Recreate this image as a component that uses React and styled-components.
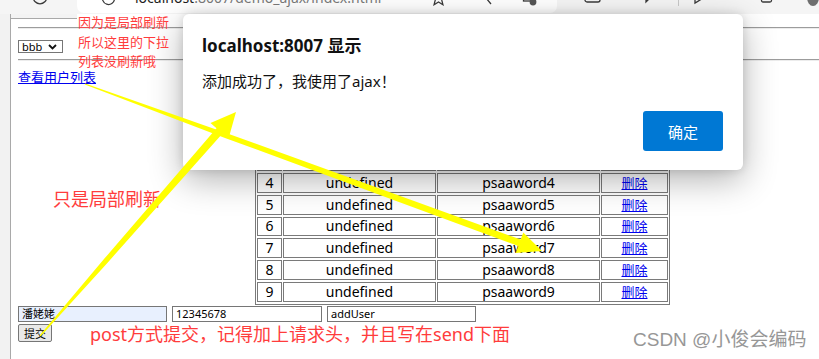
import React from 'react';
import styled, { createGlobalStyle } from 'styled-components';

const GlobalStyle = createGlobalStyle`
  html, body {
    margin: 0;
    padding: 0;
    background: #fff;
  }
  body {
    overflow: hidden;
    font-family: "Noto Sans", "Noto Sans CJK SC", sans-serif;
  }
  * {
    box-sizing: border-box;
  }
`;

const Screen = styled.div`
  position: relative;
  width: 819px;
  height: 359px;
  overflow: hidden;
  background: #f3f3f3;
  display: flex;
  flex-direction: column;
`;

/* browser chrome, only its lower edge is in the shot */
const TopBar = styled.div`
  flex: 0 0 14px;
  height: 14px;
  overflow: hidden;
  background: #f5f5f5;
`;

const TopBarInner = styled.div`
  display: flex;
  align-items: center;
  height: 28px;
  margin-top: -17px;
`;

const ToolSlot = styled.div`
  flex: 0 0 auto;
  display: flex;
  align-items: center;
  margin-left: ${p => p.$gap || 0}px;
  color: #3a3a3a;
`;

const AddressBar = styled.div`
  flex: 0 0 480px;
  height: 30px;
  margin-left: ${p => p.$gap}px;
  margin-top: 2px;
  padding-right: 20px;
  display: flex;
  align-items: center;
  background: #fff;
  border-radius: 7px;
`;

const UrlText = styled.div`
  flex: 1;
  margin-left: 18px;
  font-size: 14px;
  line-height: 28px;
  color: #7a7a7a;
  white-space: nowrap;
  overflow: hidden;
`;

const UrlHost = styled.span`
  color: #1e1e1e;
`;

const Divider = styled.div`
  width: 1px;
  height: 18px;
  margin-left: ${p => p.$gap}px;
  background: #c8c8c8;
`;

const Avatar = styled.div`
  width: 18px;
  height: 18px;
  margin-left: 34px;
  border-radius: 50%;
  background: #6e6e6e;
`;

const Body = styled.div`
  flex: 1;
  display: flex;
  min-height: 0;
`;

const SideStrip = styled.div`
  flex: 0 0 11px;
  background: #f2f2f2;
  border-right: 1px solid #a9a9a9;
`;

const Page = styled.div`
  flex: 1;
  min-width: 0;
  overflow: hidden;
  background: #fff;
`;

const FrameTop = styled.div`
  width: 66px;
  height: 5px;
  background: #f3f3f3;
  border-bottom: 1px solid #a9a9a9;
`;

const Content = styled.div`
  width: 896px;
  padding-left: 7px;
  font-family: "Noto Sans", "Noto Sans CJK SC", sans-serif;
  color: #000;
`;

const Rule = styled.hr`
  margin: ${p => p.$top}px 0 0;
  height: 0;
  border: 0;
  border-top: 1px solid #9c9c9c;
  border-bottom: 1px solid #ececec;
`;

const SelectBox = styled.div`
  width: 45px;
  height: 13px;
  margin-top: 11px;
  padding: 0 5px 0 3px;
  display: flex;
  align-items: center;
  justify-content: space-between;
  border: 1px solid #767676;
  font-size: 11px;
  line-height: 11px;
`;

const ListLink = styled.a`
  display: block;
  width: max-content;
  margin-top: 8px;
  font-size: 13px;
  line-height: 16px;
  color: #0000ee;
  text-decoration: underline;
`;

const UserTable = styled.table`
  margin: 19.6px auto 0;
  border: 1px solid #7a7a7a;
  border-spacing: 1px 2px;
  font-size: 14px;
  color: #000;
`;

const Cell = styled.td`
  width: ${p => p.$w}px;
  height: 19.8px;
  padding: 0;
  border: 1px solid #7a7a7a;
  text-align: center;
  line-height: 16px;
`;

const DeleteLink = styled.a`
  font-size: 13px;
  color: #0000ee;
  text-decoration: underline;
`;

const FormRow = styled.div`
  display: flex;
  gap: 5px;
  margin-top: 0.8px;
`;

const Field = styled.div`
  width: ${p => p.$w}px;
  height: 16px;
  padding: 0 3px;
  border: 1px solid #767676;
  background: ${p => (p.$filled ? '#e8f0fe' : '#fff')};
  font-size: 11px;
  line-height: 14px;
  white-space: nowrap;
`;

const SubmitButton = styled.div`
  width: 34px;
  height: 18px;
  margin-top: 2px;
  display: flex;
  align-items: center;
  justify-content: center;
  border: 1px solid #767676;
  border-radius: 2px;
  background: #e9e9e9;
  font-size: 11px;
`;

/* alert dialog on top of the page */
const Dialog = styled.div`
  position: absolute;
  left: 183px;
  top: 14px;
  width: 560px;
  height: 156px;
  padding: 22px 20px 19px 19px;
  display: flex;
  flex-direction: column;
  background: #fff;
  border-radius: 6px;
  box-shadow: 0 10px 34px rgba(0, 0, 0, 0.3), 0 0 10px rgba(0, 0, 0, 0.12);
  font-family: "Noto Sans", "Noto Sans CJK SC", sans-serif;
  color: #111;
`;

const DialogTitle = styled.div`
  font-size: 17px;
  font-weight: 700;
  line-height: 20px;
`;

const DialogMessage = styled.div`
  margin-top: 14.5px;
  font-size: 15px;
  line-height: 20px;
`;

const DialogFooter = styled.div`
  margin-top: auto;
  display: flex;
  justify-content: flex-end;
`;

const OkButton = styled.div`
  width: 80px;
  height: 40px;
  display: flex;
  align-items: center;
  justify-content: center;
  background: #0078d4;
  border-radius: 3px;
  color: #fff;
  font-size: 15px;
`;

/* annotations drawn on the screenshot */
const Note = styled.div`
  position: absolute;
  left: ${p => p.$x}px;
  top: ${p => p.$y}px;
  font-family: "Noto Sans", "Noto Sans CJK SC", sans-serif;
  font-size: ${p => p.$size}px;
  line-height: ${p => p.$lh}px;
  color: #ff3c3c;
  white-space: nowrap;
`;

const Watermark = styled.div`
  position: absolute;
  left: 633px;
  top: 328px;
  font-family: "Liberation Sans", "Noto Sans CJK SC", sans-serif;
  font-size: 19px;
  line-height: 24px;
  color: #979797;
  text-shadow: 0 0 1px #fff;
  white-space: nowrap;
`;

const ArrowLayer = styled.svg`
  position: absolute;
  left: 0;
  top: 0;
  width: 819px;
  height: 359px;
  pointer-events: none;
`;

const Icon = ({ w = 16, children }) => (
  <svg width={w} height="16" viewBox={`0 0 ${w} 16`} fill="none" stroke="currentColor" strokeWidth="1.3">
    {children}
  </svg>
);

const rows = [1, 2, 3, 4, 5, 6, 7, 8, 9];

export default function App() {
  return (
    <>
      <GlobalStyle />
      <Screen>
        <TopBar>
          <TopBarInner>
            <ToolSlot $gap={32}>
              <Icon w={16}>
                <circle cx="8" cy="8" r="6.8" />
              </Icon>
            </ToolSlot>
            <AddressBar $gap={29}>
              <ToolSlot $gap={23}>
                <Icon w={17}>
                  <path d="M14.5 9a6 6 0 1 1-1.8-4.8" />
                </Icon>
              </ToolSlot>
              <UrlText>
                <UrlHost>localhost</UrlHost>:8007/demo_ajax/index.html
              </UrlText>
              <ToolSlot>
                <Icon w={17}>
                  <path d="M8.5 1.5l2 4.6 5 .4-3.8 3.3 1.2 4.9-4.4-2.7-4.4 2.7 1.2-4.9L1.5 6.5l5-.4z" />
                </Icon>
              </ToolSlot>
              <ToolSlot $gap={36}>
                <Icon w={10}>
                  <path d="M8 2L3 8l5 6" />
                </Icon>
              </ToolSlot>
              <ToolSlot $gap={29}>
                <Icon w={15}>
                  <rect x="1.5" y="2" width="9" height="9" />
                  <circle cx="11" cy="12" r="3.4" fill="#555" stroke="none" />
                </Icon>
              </ToolSlot>
            </AddressBar>
            <ToolSlot $gap={26}>
              <Icon w={19}>
                <rect x="2" y="3" width="15" height="10" rx="2" />
                <path d="M9.5 6v4M7.5 8h4" />
              </Icon>
            </ToolSlot>
            <ToolSlot $gap={38}>
              <Icon w={17}>
                <path d="M3 4h11v6H9l-3 3v-3H3z" />
              </Icon>
            </ToolSlot>
            <Divider $gap={21} />
            <ToolSlot $gap={14}>
              <Icon w={14}>
                <path d="M2 14V2l10 6z" />
              </Icon>
            </ToolSlot>
            <ToolSlot $gap={53}>
              <Icon w={13}>
                <rect x="1.5" y="3" width="10" height="10" rx="1.5" />
                <path d="M6.5 5v5" />
              </Icon>
            </ToolSlot>
            <Avatar />
          </TopBarInner>
        </TopBar>

        <Body>
          <SideStrip />
          <Page>
            <FrameTop />
            <Content>
              <Rule $top={8} />
              <SelectBox>
                <span>bbb</span>
                <svg width="9" height="6" viewBox="0 0 9 6">
                  <path d="M1 1l3.5 3.5L8 1" fill="none" stroke="#111" strokeWidth="1.8" />
                </svg>
              </SelectBox>
              <Rule $top={6} />
              <ListLink href="#">查看用户列表</ListLink>
              <UserTable>
                <tbody>
                  {rows.map(i => (
                    <tr key={i}>
                      <Cell $w={25}>{i}</Cell>
                      <Cell $w={153}>undefined</Cell>
                      <Cell $w={163}>psaaword{i}</Cell>
                      <Cell $w={67}>
                        <DeleteLink href="#">删除</DeleteLink>
                      </Cell>
                    </tr>
                  ))}
                </tbody>
              </UserTable>
              <FormRow>
                <Field $w={149} $filled>潘姥姥</Field>
                <Field $w={150}>12345678</Field>
                <Field $w={149}>addUser</Field>
              </FormRow>
              <SubmitButton>提交</SubmitButton>
            </Content>
          </Page>
        </Body>

        <Dialog>
          <DialogTitle>localhost:8007 显示</DialogTitle>
          <DialogMessage>添加成功了，我使用了ajax！</DialogMessage>
          <DialogFooter>
            <OkButton>确定</OkButton>
          </DialogFooter>
        </Dialog>

        <Note $x={78} $y={13} $size={13} $lh={19.6}>
          因为是局部刷新
          <br />
          所以这里的下拉
          <br />
          列表没刷新哦
        </Note>
        <Note $x={53} $y={187} $size={18} $lh={24}>只是局部刷新</Note>
        <Note $x={90} $y={322} $size={18} $lh={24}>post方式提交，记得加上请求头，并且写在send下面</Note>
        <Watermark>CSDN @小俊会编码</Watermark>

        <ArrowLayer viewBox="0 0 819 359">
          <polygon
            fill="#ffff00"
            points="84.8,84.6 225,137.9 518.3,246.1 515.7,253.1 542,251 523.3,232.5 520.7,239.5 226.8,133.2 85.2,83.4"
          />
          <polygon
            fill="#ffff00"
            points="40.5,336.4 107.8,262.4 222.5,133.4 228.5,138.7 236,112 210.5,122.9 216.5,128.2 104,259.1 39.6,335.6"
          />
        </ArrowLayer>
      </Screen>
    </>
  );
}
